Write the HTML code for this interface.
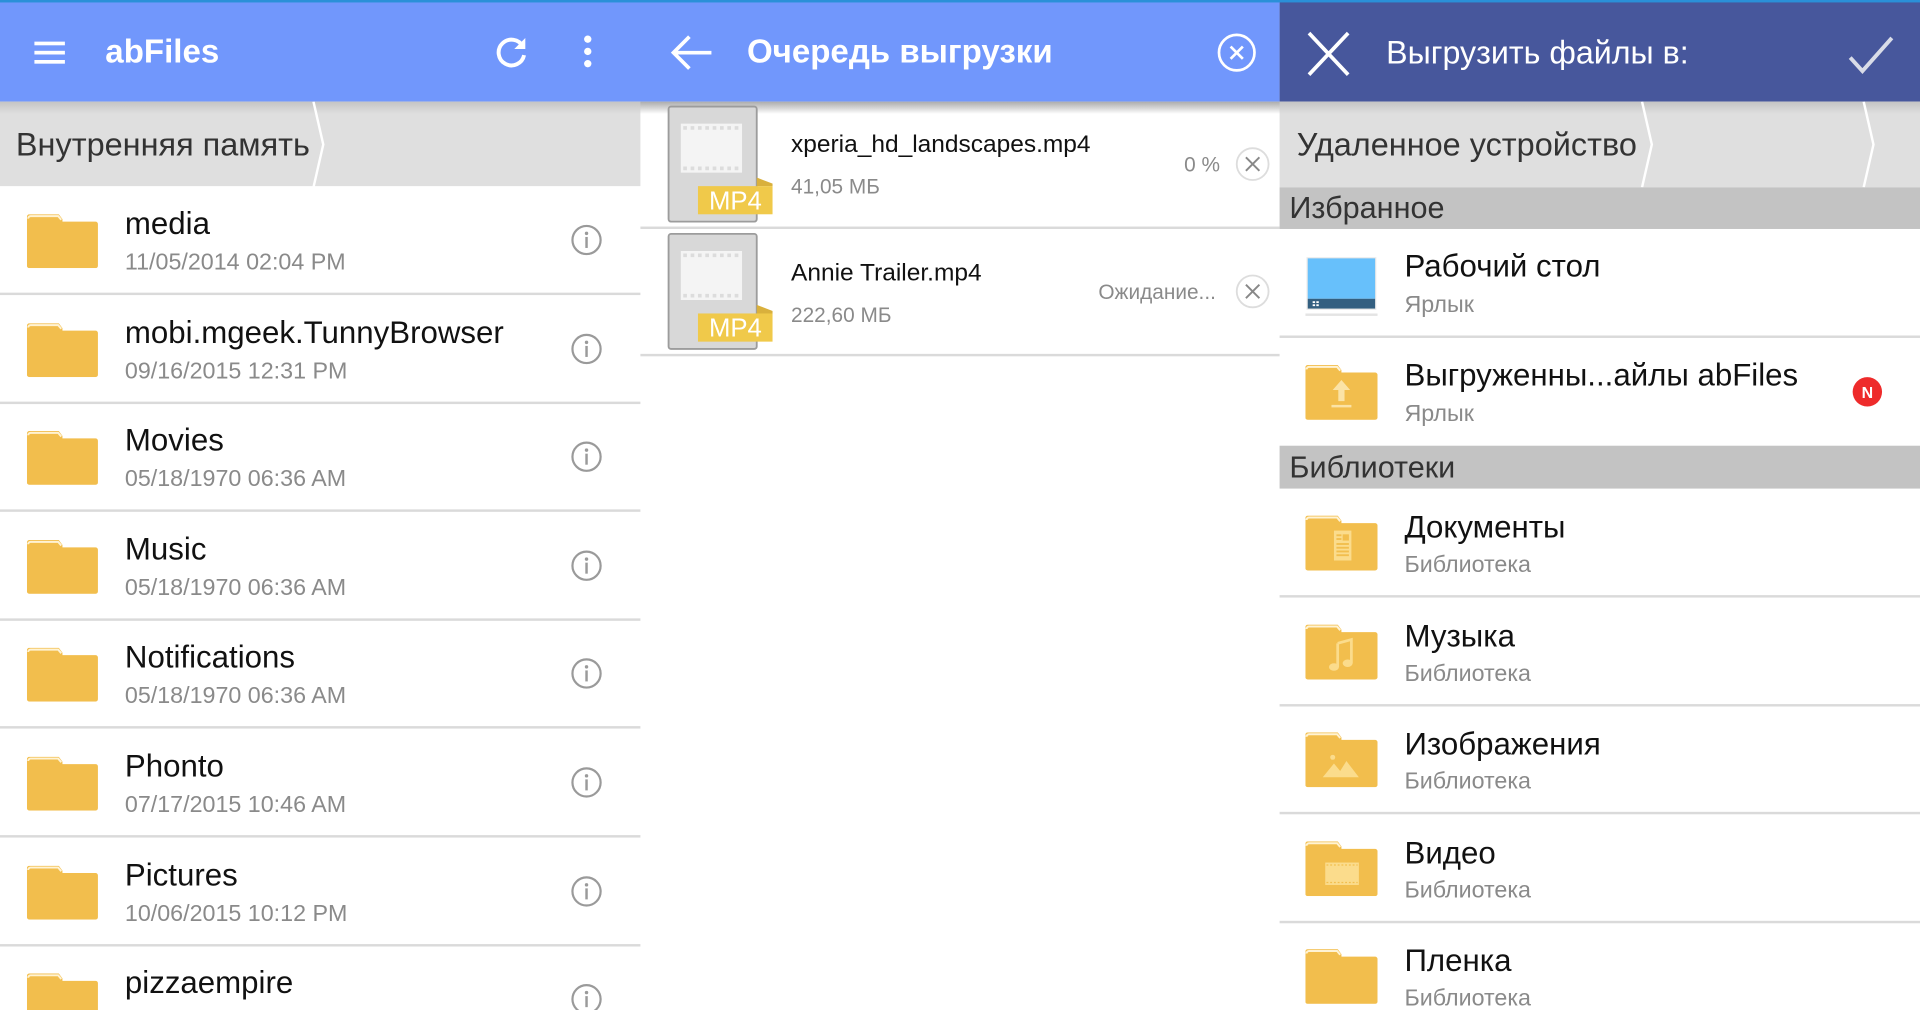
<!DOCTYPE html>
<html><head><meta charset="utf-8"><style>
html,body{margin:0;padding:0;width:1920px;height:1010px;overflow:hidden;background:#fff}
#w{position:absolute;left:0;top:0;width:1568px;height:825px;transform:scale(1.22449);transform-origin:0 0;font-family:"Liberation Sans",sans-serif;overflow:hidden;background:#fff}
.a{position:absolute}
.t{position:absolute;white-space:nowrap;line-height:1}
.title{font-size:25.5px;color:#111}
.sub{font-size:19px;color:#8a8a8a}
.sep{position:absolute;height:2px;background:#dadada}
.bar{color:#fff;font-size:27px}
</style></head><body><div id="w">
<svg width="0" height="0" style="position:absolute"><defs>
<symbol id="fold" viewBox="0 0 58 44"><path d="M2 0H26L29 4V6H56A2 2 0 0 1 58 8V42A2 2 0 0 1 56 44H2A2 2 0 0 1 0 42V2A2 2 0 0 1 2 0Z" fill="#f2be4d"/><path d="M1 3.5A2 2 0 0 1 3 1.5H25.5L28 4.5" fill="none" stroke="#fff3d4" stroke-width="1.6"/></symbol>
<symbol id="info" viewBox="0 0 26 26"><circle cx="13" cy="13" r="11.5" fill="none" stroke="#9a9a9a" stroke-width="1.8"/><circle cx="13" cy="7.6" r="1.4" fill="#9a9a9a"/><rect x="12" y="10.5" width="2" height="9" fill="#9a9a9a"/></symbol>
</defs></svg>

<div class="a" style="left:0;top:0;width:1045px;height:83px;background:#7197fc"></div>
<div class="a" style="left:1045px;top:0;width:523px;height:83px;background:#47579c"></div>
<div class="a" style="left:0;top:0;width:1568px;height:2px;background:#2a90d8"></div>
<div class="a" style="left:0;top:83px;width:523px;height:69px;background:#dfdfdf"></div>
<div class="a" style="left:1045px;top:83px;width:523px;height:70px;background:#dfdfdf"></div>
<div class="a" style="left:0;top:83px;width:1568px;height:10px;background:linear-gradient(#c4c4c4,rgba(220,220,220,0))"></div>
<div class="a" style="left:523px;top:83px;width:522px;height:10px;background:linear-gradient(rgba(0,0,0,.12),rgba(255,255,255,0))"></div>
<svg class="a" style="left:250px;top:83px" width="20" height="70"><path d="M6 0L14 35L6 70" fill="none" stroke="#fff" stroke-width="2"/></svg>
<svg class="a" style="left:1335px;top:83px" width="20" height="70"><path d="M6 0L14 35L6 70" fill="none" stroke="#fff" stroke-width="2"/></svg>
<svg class="a" style="left:1516px;top:83px" width="20" height="70"><path d="M6 0L14 35L6 70" fill="none" stroke="#fff" stroke-width="2"/></svg>

<svg class="a" style="left:28px;top:32px" width="26" height="22"><g fill="#fff"><rect x="0" y="2" width="25" height="3"/><rect x="0" y="9.5" width="25" height="3"/><rect x="0" y="17" width="25" height="3"/></g></svg>
<div class="t bar" style="left:86px;top:29px;font-weight:bold;font-size:27px">abFiles</div>
<svg class="a" style="left:403px;top:28px" width="30" height="30"><path d="M24 10A10.5 10.5 0 1 0 25 17" fill="none" stroke="#fff" stroke-width="3.2"/><path d="M26 3V12H17Z" fill="#fff"/></svg>
<svg class="a" style="left:472px;top:28px" width="16" height="30"><g fill="#fff"><circle cx="8" cy="4" r="3"/><circle cx="8" cy="14" r="3"/><circle cx="8" cy="24" r="3"/></g></svg>
<div class="t" style="left:13px;top:105px;font-size:26.5px;color:#333">Внутренняя память</div>

<div class="a" style="left:0;top:152px;width:523px;height:90px">
<svg class="a" style="left:22px;top:23px" width="58" height="44"><use href="#fold"/></svg><div class="t title" style="left:102px;top:19px">media</div><div class="t sub" style="left:102px;top:53px">11/05/2014 02:04 PM</div><svg class="a" style="left:466px;top:31px" width="26" height="26"><use href="#info"/></svg><div class="sep" style="left:0;top:87px;width:523px"></div>
</div>
<div class="a" style="left:0;top:240.6px;width:523px;height:90px">
<svg class="a" style="left:22px;top:23px" width="58" height="44"><use href="#fold"/></svg><div class="t title" style="left:102px;top:19px">mobi.mgeek.TunnyBrowser</div><div class="t sub" style="left:102px;top:53px">09/16/2015 12:31 PM</div><svg class="a" style="left:466px;top:31px" width="26" height="26"><use href="#info"/></svg><div class="sep" style="left:0;top:87px;width:523px"></div>
</div>
<div class="a" style="left:0;top:329.2px;width:523px;height:90px">
<svg class="a" style="left:22px;top:23px" width="58" height="44"><use href="#fold"/></svg><div class="t title" style="left:102px;top:19px">Movies</div><div class="t sub" style="left:102px;top:53px">05/18/1970 06:36 AM</div><svg class="a" style="left:466px;top:31px" width="26" height="26"><use href="#info"/></svg><div class="sep" style="left:0;top:87px;width:523px"></div>
</div>
<div class="a" style="left:0;top:417.8px;width:523px;height:90px">
<svg class="a" style="left:22px;top:23px" width="58" height="44"><use href="#fold"/></svg><div class="t title" style="left:102px;top:19px">Music</div><div class="t sub" style="left:102px;top:53px">05/18/1970 06:36 AM</div><svg class="a" style="left:466px;top:31px" width="26" height="26"><use href="#info"/></svg><div class="sep" style="left:0;top:87px;width:523px"></div>
</div>
<div class="a" style="left:0;top:506.4px;width:523px;height:90px">
<svg class="a" style="left:22px;top:23px" width="58" height="44"><use href="#fold"/></svg><div class="t title" style="left:102px;top:19px">Notifications</div><div class="t sub" style="left:102px;top:53px">05/18/1970 06:36 AM</div><svg class="a" style="left:466px;top:31px" width="26" height="26"><use href="#info"/></svg><div class="sep" style="left:0;top:87px;width:523px"></div>
</div>
<div class="a" style="left:0;top:595px;width:523px;height:90px">
<svg class="a" style="left:22px;top:23px" width="58" height="44"><use href="#fold"/></svg><div class="t title" style="left:102px;top:19px">Phonto</div><div class="t sub" style="left:102px;top:53px">07/17/2015 10:46 AM</div><svg class="a" style="left:466px;top:31px" width="26" height="26"><use href="#info"/></svg><div class="sep" style="left:0;top:87px;width:523px"></div>
</div>
<div class="a" style="left:0;top:683.6px;width:523px;height:90px">
<svg class="a" style="left:22px;top:23px" width="58" height="44"><use href="#fold"/></svg><div class="t title" style="left:102px;top:19px">Pictures</div><div class="t sub" style="left:102px;top:53px">10/06/2015 10:12 PM</div><svg class="a" style="left:466px;top:31px" width="26" height="26"><use href="#info"/></svg><div class="sep" style="left:0;top:87px;width:523px"></div>
</div>
<div class="a" style="left:0;top:772.2px;width:523px;height:90px">
<svg class="a" style="left:22px;top:23px" width="58" height="44"><use href="#fold"/></svg><div class="t title" style="left:102px;top:19px">pizzaempire</div><svg class="a" style="left:466px;top:31px" width="26" height="26"><use href="#info"/></svg>
</div>

<svg class="a" style="left:546px;top:27px" width="38" height="32"><path d="M35 16H4M17 3L4 16L17 29" fill="none" stroke="#fff" stroke-width="3"/></svg>
<div class="t bar" style="left:610px;top:29px;font-weight:bold">Очередь выгрузки</div>
<svg class="a" style="left:993px;top:26px" width="34" height="34"><circle cx="17" cy="17" r="14.5" fill="none" stroke="#fff" stroke-width="2.2"/><path d="M12 12L22 22M22 12L12 22" stroke="#fff" stroke-width="2.2"/></svg>

<svg class="a" style="left:545px;top:86px" width="86" height="96">
<rect x="1" y="1" width="72" height="94" rx="2" fill="#d8d8d8" stroke="#9c9c9c" stroke-width="1.5"/><rect x="11" y="15" width="50" height="40" fill="#f4f4f4"/><path d="M13 18.5H59M13 51.5H59" stroke="#dcdcdc" stroke-width="3" stroke-dasharray="3 3"/><path d="M73 59L86 64V66H73Z" fill="#d9b03c"/><rect x="25" y="66" width="61" height="23" fill="#f0c94a"/></svg>
<div class="t" style="left:579px;top:154px;font-size:21px;color:#fff">MP4</div>
<div class="t" style="left:646px;top:108px;font-size:20px;color:#111">xperia_hd_landscapes.mp4</div>
<div class="t sub" style="left:646px;top:144px;font-size:17px">41,05 МБ</div>
<div class="t sub" style="left:967px;top:126px;font-size:17px">0 %</div>
<svg class="a" style="left:1009px;top:120px" width="28" height="28"><circle cx="14" cy="14" r="13" fill="none" stroke="#ddd" stroke-width="1.5"/><path d="M8.5 8.5L19.5 19.5M19.5 8.5L8.5 19.5" stroke="#888" stroke-width="1.6"/></svg>
<div class="sep" style="left:523px;top:185px;width:522px"></div>
<svg class="a" style="left:545px;top:190px" width="86" height="96">
<rect x="1" y="1" width="72" height="94" rx="2" fill="#d8d8d8" stroke="#9c9c9c" stroke-width="1.5"/><rect x="11" y="15" width="50" height="40" fill="#f4f4f4"/><path d="M13 18.5H59M13 51.5H59" stroke="#dcdcdc" stroke-width="3" stroke-dasharray="3 3"/><path d="M73 59L86 64V66H73Z" fill="#d9b03c"/><rect x="25" y="66" width="61" height="23" fill="#f0c94a"/></svg>
<div class="t" style="left:579px;top:258px;font-size:21px;color:#fff">MP4</div>
<div class="t" style="left:646px;top:213px;font-size:20px;color:#111">Annie Trailer.mp4</div>
<div class="t sub" style="left:646px;top:249px;font-size:17px">222,60 МБ</div>
<div class="t sub" style="left:897px;top:230px;font-size:17px">Ожидание...</div>
<svg class="a" style="left:1009px;top:224px" width="28" height="28"><circle cx="14" cy="14" r="13" fill="none" stroke="#ddd" stroke-width="1.5"/><path d="M8.5 8.5L19.5 19.5M19.5 8.5L8.5 19.5" stroke="#888" stroke-width="1.6"/></svg>
<div class="sep" style="left:523px;top:289px;width:522px"></div>

<svg class="a" style="left:1066px;top:24px" width="38" height="40"><path d="M3 3L35 37M35 3L3 37" stroke="#fff" stroke-width="3"/></svg>
<div class="t bar" style="left:1132px;top:30px;font-size:26.3px">Выгрузить файлы в:</div>
<svg class="a" style="left:1508px;top:28px" width="40" height="34"><path d="M3 19L13 30L37 3" fill="none" stroke="#d9dce8" stroke-width="3.2"/></svg>
<div class="t" style="left:1059px;top:105px;font-size:26.5px;color:#333">Удаленное устройство</div>

<div class="a" style="left:1045px;top:153px;width:523px;height:34px;background:#c3c3c3"></div>
<div class="t" style="left:1053px;top:158px;font-size:25px;color:#333">Избранное</div>
<svg class="a" style="left:1066px;top:210px" width="60" height="50"><rect x="1" y="0" width="57" height="43" fill="#e8e8e8"/><rect x="2" y="1" width="55" height="33" fill="#67c0fb"/><rect x="2" y="34" width="55" height="8" fill="#335f80"/><g fill="#fff"><rect x="6" y="36" width="2" height="1.5"/><rect x="9" y="36" width="2" height="1.5"/><rect x="6" y="38.5" width="2" height="1.5"/><rect x="9" y="38.5" width="2" height="1.5"/></g><rect x="0" y="46" width="59" height="2" fill="#e4e4e4"/></svg>
<div class="t title" style="left:1147px;top:206px">Рабочий стол</div>
<div class="t sub" style="left:1147px;top:240px">Ярлык</div>
<div class="sep" style="left:1045px;top:274px;width:523px"></div>
<svg class="a" style="left:1066px;top:298px" width="59" height="45" viewBox="0 0 58 44"><use href="#fold"/><path d="M29 12L22 20H26.5V29H31.5V20H36Z" fill="#fbe3a6"/><rect x="21" y="32" width="16" height="2" fill="#fbe3a6"/></svg>
<div class="t title" style="left:1147px;top:295px">Выгруженны...айлы abFiles</div>
<div class="t sub" style="left:1147px;top:329px">Ярлык</div>
<svg class="a" style="left:1512px;top:307px" width="26" height="26"><circle cx="13" cy="13" r="12" fill="#ee2b2b"/><text x="13" y="18" font-family="Liberation Sans" font-size="13" font-weight="bold" fill="#fff" text-anchor="middle">N</text></svg>
<div class="a" style="left:1045px;top:364px;width:523px;height:35px;background:#c3c3c3"></div>
<div class="t" style="left:1053px;top:370px;font-size:25px;color:#333">Библиотеки</div>

<div class="a" style="left:1045px;top:399px;width:523px;height:90px">
<svg class="a" style="left:21px;top:22px" width="59" height="45" viewBox="0 0 58 44"><use href="#fold"/><rect x="23" y="12" width="14" height="24" fill="#fbdc8c"/><g fill="#f2be4d"><rect x="25" y="15" width="4" height="1.5"/><rect x="25" y="18" width="4" height="1.5"/><rect x="30" y="15" width="5" height="5"/><rect x="25" y="22" width="10" height="1.5"/><rect x="25" y="25" width="10" height="1.5"/><rect x="25" y="28" width="10" height="1.5"/><rect x="25" y="31" width="10" height="1.5"/></g></svg>
<div class="t title" style="left:102px;top:20px">Документы</div><div class="t sub" style="left:102px;top:53px">Библиотека</div><div class="sep" style="left:0;top:87px;width:523px"></div></div>
<div class="a" style="left:1045px;top:487.6px;width:523px;height:90px">
<svg class="a" style="left:21px;top:22px" width="59" height="45" viewBox="0 0 58 44"><use href="#fold"/><path d="M26 15L37 12V31" fill="none" stroke="#fbdc8c" stroke-width="2.2"/><path d="M26 15V34" stroke="#fbdc8c" stroke-width="2.2"/><ellipse cx="23" cy="34" rx="4" ry="3" fill="#fbdc8c"/><ellipse cx="34" cy="31" rx="4" ry="3" fill="#fbdc8c"/></svg>
<div class="t title" style="left:102px;top:20px">Музыка</div><div class="t sub" style="left:102px;top:53px">Библиотека</div><div class="sep" style="left:0;top:87px;width:523px"></div></div>
<div class="a" style="left:1045px;top:576.2px;width:523px;height:90px">
<svg class="a" style="left:21px;top:22px" width="59" height="45" viewBox="0 0 58 44"><use href="#fold"/><circle cx="22" cy="20" r="2" fill="#fbdc8c"/><path d="M14 36L23 25L28 31L33 23L43 36Z" fill="#fbdc8c"/></svg>
<div class="t title" style="left:102px;top:20px">Изображения</div><div class="t sub" style="left:102px;top:53px">Библиотека</div><div class="sep" style="left:0;top:87px;width:523px"></div></div>
<div class="a" style="left:1045px;top:664.8px;width:523px;height:90px">
<svg class="a" style="left:21px;top:22px" width="59" height="45" viewBox="0 0 58 44"><use href="#fold"/><rect x="16" y="17" width="27" height="18" fill="#fbdc8c"/><path d="M17 19H42M17 33H42" stroke="#f2be4d" stroke-width="1" stroke-dasharray="1.5 1.5"/></svg>
<div class="t title" style="left:102px;top:20px">Видео</div><div class="t sub" style="left:102px;top:53px">Библиотека</div><div class="sep" style="left:0;top:87px;width:523px"></div></div>
<div class="a" style="left:1045px;top:753.4px;width:523px;height:90px">
<svg class="a" style="left:21px;top:22px" width="59" height="45" viewBox="0 0 58 44"><use href="#fold"/></svg>
<div class="t title" style="left:102px;top:20px">Пленка</div><div class="t sub" style="left:102px;top:53px">Библиотека</div></div>
</div></body></html>
